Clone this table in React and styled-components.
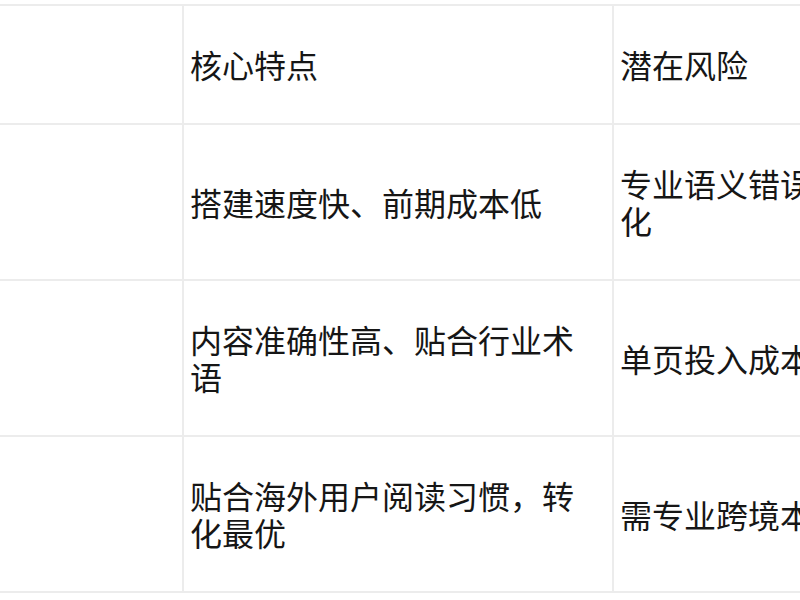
import React from 'react';
import styled, { createGlobalStyle } from 'styled-components';

const GlobalStyle = createGlobalStyle`
  html, body {
    margin: 0;
    padding: 0;
    background: #ffffff;
  }
`;

const Viewport = styled.div`
  width: 800px;
  height: 600px;
  overflow: hidden;
  padding-top: 4px;
  box-sizing: border-box;
  background: #fff;
`;

const Table = styled.table`
  border-collapse: collapse;
  table-layout: fixed;
  width: 1100px;
  font-family: "Noto Sans CJK SC", "Noto Sans", sans-serif;
  font-size: 32px;
  line-height: 37px;
  color: #161616;
`;

const Col = styled.col`
  width: ${(p) => p.$width}px;
`;

const Cell = styled.td`
  border-top: 2px solid #ececec;
  border-bottom: 2px solid #ececec;
  border-left: ${(p) => (p.$first ? 'none' : '2px solid #ececec')};
  padding: 40px 12px 40px 6px;
  vertical-align: middle;
  text-align: left;
  font-weight: 400;
  word-break: break-all;
`;

const rows = [
  { feature: '核心特点', risk: '潜在风险' },
  { feature: '搭建速度快、前期成本低', risk: '专业语义错误风险大，难以本地化' },
  { feature: '内容准确性高、贴合行业术语', risk: '单页投入成本较高' },
  { feature: '贴合海外用户阅读习惯，转化最优', risk: '需专业跨境本地化团队' },
];

const App = () => {
  return (
    <>
      <GlobalStyle />
      <Viewport>
        <Table>
          <colgroup>
            <Col $width={183} />
            <Col $width={430} />
            <Col $width={487} />
          </colgroup>
          <tbody>
            {rows.map((row, i) => (
              <tr key={i}>
                <Cell $first />
                <Cell>{row.feature}</Cell>
                <Cell>{row.risk}</Cell>
              </tr>
            ))}
          </tbody>
        </Table>
      </Viewport>
    </>
  );
};

export default App;
